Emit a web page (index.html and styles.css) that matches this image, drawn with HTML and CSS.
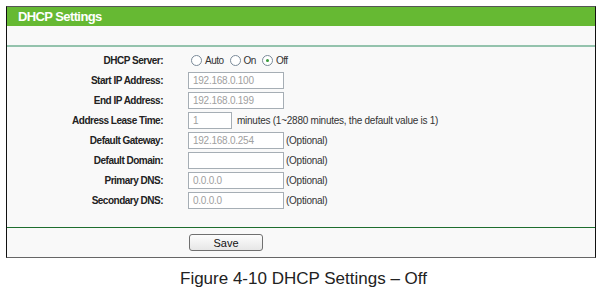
FILE: index.html
```html
<!DOCTYPE html>
<html lang="en">
<head>
<meta charset="UTF-8">
<meta name="viewport" content="width=device-width, initial-scale=1.0">
<title>DHCP Settings</title>
<link rel="stylesheet" href="styles.css">
</head>
<body>
<div class="panel">
    <div class="panel-title">DHCP Settings</div>
    <div class="panel-band"></div>
    <div class="form">
        <div class="row">
            <div class="label">DHCP Server:</div>
            <div class="field">
                <span class="radio"></span><span class="opt">Auto</span>
                <span class="radio"></span><span class="opt">On</span>
                <span class="radio checked"></span><span class="opt">Off</span>
            </div>
        </div>
        <div class="row">
            <div class="label">Start IP Address:</div>
            <div class="field"><div class="box">192.168.0.100</div></div>
        </div>
        <div class="row">
            <div class="label">End IP Address:</div>
            <div class="field"><div class="box">192.168.0.199</div></div>
        </div>
        <div class="row">
            <div class="label">Address Lease Time:</div>
            <div class="field"><div class="box small">1</div><span class="note wide">minutes (1~2880 minutes, the default value is 1)</span></div>
        </div>
        <div class="row">
            <div class="label">Default Gateway:</div>
            <div class="field"><div class="box">192.168.0.254</div><span class="note">(Optional)</span></div>
        </div>
        <div class="row">
            <div class="label">Default Domain:</div>
            <div class="field"><div class="box"></div><span class="note">(Optional)</span></div>
        </div>
        <div class="row">
            <div class="label">Primary DNS:</div>
            <div class="field"><div class="box">0.0.0.0</div><span class="note">(Optional)</span></div>
        </div>
        <div class="row">
            <div class="label">Secondary DNS:</div>
            <div class="field"><div class="box">0.0.0.0</div><span class="note">(Optional)</span></div>
        </div>
    </div>
    <div class="actions">
        <button class="save">Save</button>
    </div>
</div>
<div class="caption">Figure 4-10 DHCP Settings &ndash; Off</div>
</body>
</html>
```
FILE: styles.css
```css
body {
    margin: 0;
    background: #fff;
    font-family: "Liberation Sans", Arial, sans-serif;
}
.panel {
    margin: 6px 0 0 6px;
    width: 588px;
    border-top: 1px solid #555;
    border-left: 1px solid #111;
    border-right: 1px solid #111;
    border-bottom: 1px solid #666;
    background: #f9f9f9;
}
.panel-title {
    height: 19px;
    line-height: 19px;
    background: #66b933;
    color: #fff;
    font-weight: bold;
    font-size: 13px;
    letter-spacing: -0.6px;
    padding-left: 11px;
}
.panel-band {
    height: 19px;
    border-bottom: 2px solid #94c3ad;
}
.form {
    padding: 3px 0 17px 0;
    border-bottom: 1px solid #1e6e2e;
}
.row {
    display: flex;
    align-items: center;
    height: 20px;
}
.label {
    width: 156px;
    margin-right: 25px;
    text-align: right;
    font-size: 10px;
    font-weight: bold;
    letter-spacing: -0.5px;
    color: #222;
}
.field {
    display: flex;
    align-items: center;
    font-size: 10px;
    letter-spacing: -0.25px;
    color: #333;
}
.radio {
    width: 9px;
    height: 9px;
    border: 1px solid #7a8a99;
    border-radius: 50%;
    background: #fff;
    margin: 0 3px 0 3px;
    position: relative;
}
.radio.checked::after {
    content: "";
    position: absolute;
    left: 3px;
    top: 3px;
    width: 3px;
    height: 3px;
    border-radius: 50%;
    background: #3a9a3a;
}
.opt {
    margin-right: 3px;
    letter-spacing: -0.5px;
}
.box {
    width: 90px;
    height: 15px;
    line-height: 15px;
    border: 1px solid #a6aeb5;
    background: #fff;
    padding-left: 4px;
    color: #a0a0a0;
    font-size: 10px;
}
.box.small {
    width: 38px;
}
.note {
    margin-left: 2px;
}
.note.wide {
    margin-left: 5px;
}
.actions {
    height: 29px;
    display: flex;
    align-items: center;
    padding-left: 182px;
}
.save {
    width: 74px;
    height: 17px;
    padding: 0;
    border: 1px solid #707070;
    border-radius: 3px;
    background: linear-gradient(to bottom, #fdfdfd, #e6e6e6);
    font-family: "Liberation Sans", Arial, sans-serif;
    font-size: 11px;
    color: #111;
}
.caption {
    margin-top: 11px;
    padding-left: 180px;
    font-size: 17px;
    color: #222;
}
```
